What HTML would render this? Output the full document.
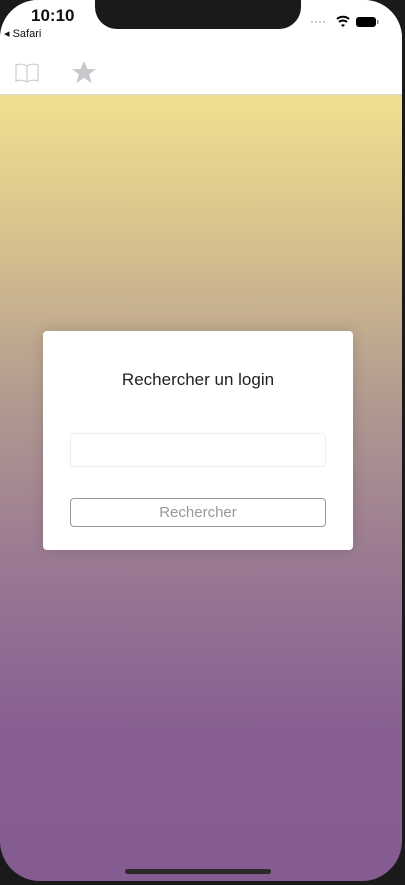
<!DOCTYPE html>
<html><head><style>
body{margin:0;width:405px;height:885px;background:#1a1a1a;overflow:hidden;font-family:"Liberation Sans",sans-serif;position:relative}
.screen{position:absolute;left:0;top:0;width:402px;height:881px;border-radius:38px 38px 40px 40px;overflow:hidden;background:linear-gradient(#f0e08e 95px,#d8c48e 230px,#b29a90 400px,#9a7a92 560px,#875f92 730px,#845c91 881px)}
.top{position:absolute;left:0;top:0;width:402px;height:94px;background:#fff;border-bottom:1px solid #d8d8d8}
.notch{position:absolute;left:95px;top:0;width:206px;height:29px;background:#1a1a1a;border-radius:0 0 22px 22px}
.time{position:absolute;left:31px;top:6px;font-size:17px;font-weight:bold;color:#111}
.safari{position:absolute;left:4px;top:27px;font-size:11px;color:#111}
.card{position:absolute;left:43px;top:331px;width:310px;height:219px;background:#fff;border-radius:4px;box-shadow:0 0 14px rgba(0,0,0,.15)}
.title{position:absolute;top:39px;width:100%;text-align:center;font-size:17px;color:#222}
.input{position:absolute;left:27px;top:102px;width:254px;height:32px;border:1px solid #eee;border-radius:4px}
.btn{position:absolute;left:27px;top:167px;width:254px;height:27px;border:1px solid #999;border-radius:4px;text-align:center;line-height:28px;font-size:15px;color:#999}
.home{position:absolute;left:125px;top:869px;width:146px;height:5px;border-radius:3px;background:#2a2a2a}
</style></head><body>
<div class="screen">
<div class="top">
<div class="notch"></div>
<div class="time">10:10</div>
<div class="safari">◂ Safari</div>
<svg style="position:absolute;left:310px;top:15px" width="70" height="14">
<g fill="#bbb"><circle cx="2" cy="7" r="1"/><circle cx="6" cy="7" r="1"/><circle cx="10" cy="7" r="1"/><circle cx="14" cy="7" r="1"/></g>
<path d="M27 4a9 9 0 0 1 12 0M29 7a6 6 0 0 1 8 0" stroke="#000" stroke-width="2" fill="none"/><path d="M31 10l2 2 2-2a3 3 0 0 0-4 0z" fill="#000"/>
<rect x="46" y="2" width="20" height="10" rx="3" fill="#000"/><rect x="67" y="5" width="1.5" height="4" fill="#888"/>
</svg>
<svg style="position:absolute;left:14px;top:62px" width="26" height="22"><path d="M2 3q6-2 11 1q5-3 11-1v16q-6-2-11 1q-5-3-11-1z M13 4v16" stroke="#ccc" stroke-width="1.2" fill="none"/></svg>
<svg style="position:absolute;left:71px;top:60px" width="26" height="26"><path d="M13 1l3.5 8h8.5l-7 5.5 2.7 8.5-7.7-5-7.7 5 2.7-8.5-7-5.5h8.5z" fill="#c8c8cc"/></svg>
</div>
<div class="card">
<div class="title">Rechercher un login</div>
<div class="input"></div>
<div class="btn">Rechercher</div>
</div>
<div class="home"></div>
</div>
</body></html>
